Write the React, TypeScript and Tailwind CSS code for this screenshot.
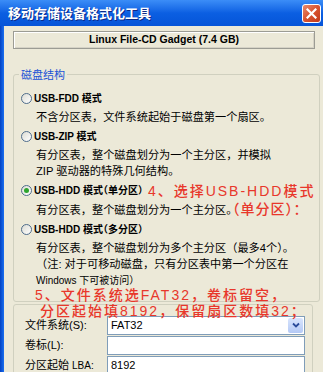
import React from 'react';

const FONT = "font-['Liberation_Sans','Noto_Sans_CJK_SC',sans-serif]";

function Radio({ checked }: { checked?: boolean }) {
  return (
    <span className="flex h-[11px] w-[11px] shrink-0 items-center justify-center rounded-full border border-[#4f6d8c] bg-linear-to-br from-[#dcdcd4] to-white">
      {checked && <span className="h-[5px] w-[5px] rounded-full bg-[#2ea52e]" />}
    </span>
  );
}

function Option({
  label,
  checked,
  note,
  children,
}: {
  label: React.ReactNode;
  checked?: boolean;
  note?: React.ReactNode;
  children: React.ReactNode;
}) {
  return (
    <div className="flex flex-col">
      <div className="flex h-[16px] items-center gap-[2px] whitespace-nowrap">
        <Radio checked={checked} />
        <span className="text-[10px] leading-[16px] font-bold text-black [font-feature-settings:'halt']">{label}</span>
        {note}
      </div>
      <div className="mt-[2px] pl-[15px] text-[11.2px] leading-[16px] whitespace-nowrap text-black">{children}</div>
    </div>
  );
}

export default function App() {
  const red = 'text-[#e8372b] font-medium text-[14px] tracking-[2px]';

  return (
    <div className={`relative h-[372px] w-[323px] overflow-hidden bg-[#ece9d8] ${FONT}`}>
      {/* title bar */}
      <div className="flex h-[26px] items-center justify-between bg-linear-to-b from-[#3b8df7] via-[#0b5fe2] to-[#0654d8] pl-[8px] pr-[2px]">
        <span className="text-[13px] leading-none font-bold text-white [text-shadow:1px_1px_#0b2a8a]">
          移动存储设备格式化工具
        </span>
        <span className="flex h-[19px] w-[19px] items-center justify-center rounded-[3px] border border-white bg-linear-to-br from-[#e98a6c] via-[#d8532f] to-[#c2391a]">
          <svg width="11" height="11" viewBox="0 0 11 11">
            <path d="M1.5 1.5 L9.5 9.5 M9.5 1.5 L1.5 9.5" stroke="white" strokeWidth="2.2" strokeLinecap="square" />
          </svg>
        </span>
      </div>

      <div className="flex h-[346px]">
        <div className="w-[4px] shrink-0 bg-linear-to-r from-[#0541c2] to-[#1b6ff0]" />

        <div className="flex flex-col pl-[9px]">
          {/* device */}
          <div className="mt-[5px] flex h-[25px] w-[302px] items-center justify-center border border-[#9c9c94] shadow-[inset_1px_1px_0_#ffffff,inset_-1px_-1px_0_#d6d3c6]">
            <span className="text-[10.5px] font-bold text-black">Linux File-CD Gadget (7.4 GB)</span>
          </div>

          {/* disk structure */}
          <fieldset className="mt-[20px] w-[302px] rounded-[3px] border border-[#d0d0bf] pt-[10px] pr-[4px] pb-[12px] pl-[7px]">
            <legend className="-ml-[2px] px-[2px] text-[11px] leading-[12px] text-[#1a52d6]">磁盘结构</legend>
            <div className="flex flex-col gap-[4px]">
              <Option label="USB-FDD 模式">不含分区表，文件系统起始于磁盘第一个扇区。</Option>
              <Option label="USB-ZIP 模式">
                有分区表，整个磁盘划分为一个主分区，并模拟
                <br />
                ZIP 驱动器的特殊几何结构。
              </Option>
              <Option
                checked
                label="USB-HDD 模式（单分区）"
                note={<span className={`ml-[3px] leading-[16px] ${red}`}>4、选择USB-HDD模式</span>}
              >
                有分区表，整个磁盘划分为一个主分区。
                <span className="-ml-[5px] leading-[16px] text-[14px] font-medium tracking-[1px] text-[#e8372b]">（单分区）：</span>
              </Option>
              <Option label="USB-HDD 模式（多分区）">
                有分区表，整个磁盘划分为多个主分区（最多4个）。
                <br />
                （注: 对于可移动磁盘，只有分区表中第一个分区在
                <br />
                <span className="text-[10px]">Windows 下可被访问）</span>
              </Option>
            </div>
          </fieldset>

          {/* file system */}
          <fieldset className="mt-[2px] w-[300px] rounded-[3px] border border-[#d0d0bf] pt-[11px] pr-[7px] pl-[11px]">
            <div className="flex flex-col gap-[1px] text-[11px] text-black">
              <div className="flex h-[19px] items-center">
                <span className="w-[82px] shrink-0">文件系统(S):</span>
                <div className="flex h-[19px] flex-1 items-center justify-between border border-[#7f9db9] bg-white pl-[3px] pr-[1px]">
                  <span>FAT32</span>
                  <span className="flex h-[15px] w-[15px] items-center justify-center rounded-[2px] bg-linear-to-b from-[#d9e5fd] to-[#b4c9f5]">
                    <svg width="8" height="6" viewBox="0 0 8 6">
                      <path d="M1 1.5 L4 4.5 L7 1.5" fill="none" stroke="#2a4b9a" strokeWidth="1.8" />
                    </svg>
                  </span>
                </div>
              </div>
              <div className="flex h-[19px] items-center">
                <span className="w-[82px] shrink-0">卷标(L):</span>
                <div className="h-[19px] flex-1 border border-[#7f9db9] bg-white" />
              </div>
              <div className="flex h-[19px] items-center">
                <span className="w-[82px] shrink-0">
                  分区起始 <span className="text-[10px]">LBA:</span>
                </span>
                <div className="flex h-[19px] flex-1 items-center border border-[#7f9db9] bg-white pl-[3px]">8192</div>
              </div>
            </div>
          </fieldset>
        </div>
      </div>

      {/* red annotation drawn over the dialog */}
      <div className={`absolute top-[287px] left-[35px] flex flex-col leading-[16px] whitespace-nowrap ${red}`}>
        <span>5、文件系统选FAT32，卷标留空，</span>
        <span className="ml-[5px]">分区起始填8192，保留扇区数填32；</span>
      </div>
    </div>
  );
}
